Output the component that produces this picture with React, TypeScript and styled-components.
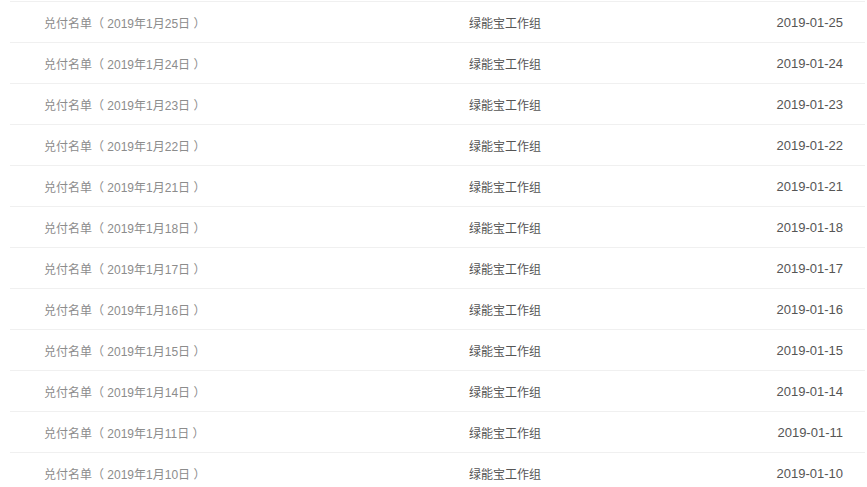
import React from "react";
import styled, { createGlobalStyle } from "styled-components";

const days = [25, 24, 23, 22, 21, 18, 17, 16, 15, 14, 11, 10];

const GlobalStyle = createGlobalStyle`
  body {
    margin: 0;
    background: #fff;
    font-family: "Liberation Sans", "Noto Sans CJK SC", sans-serif;
  }
`;

const List = styled.ul`
  list-style: none;
  margin: 1px 2px 0 10px;
  padding: 0;
  height: 486px;
  overflow: hidden;
`;

const Row = styled.li`
  display: flex;
  align-items: center;
  height: 40px;
  padding: 0 22px 0 34px;
  border-top: 1px solid #f0f0f0;
`;

const Title = styled.span`
  width: 425px;
  font-size: 12px;
  color: #8c8c8c;
  white-space: pre;
`;

const Author = styled.span`
  font-size: 12px;
  color: #555;
`;

const Date = styled.span`
  margin-left: auto;
  font-size: 13px;
  color: #555;
`;

const pad = (n: number) => (n < 10 ? "0" + n : String(n));

const App: React.FC = () => {
  return (
    <>
      <GlobalStyle />
      <List>
        {days.map(d => (
          <Row key={d}>
            <Title>{`兑付名单（ 2019年1月${d}日 ）`}</Title>
            <Author>绿能宝工作组</Author>
            <Date>2019-01-{pad(d)}</Date>
          </Row>
        ))}
      </List>
    </>
  );
};

export default App;
